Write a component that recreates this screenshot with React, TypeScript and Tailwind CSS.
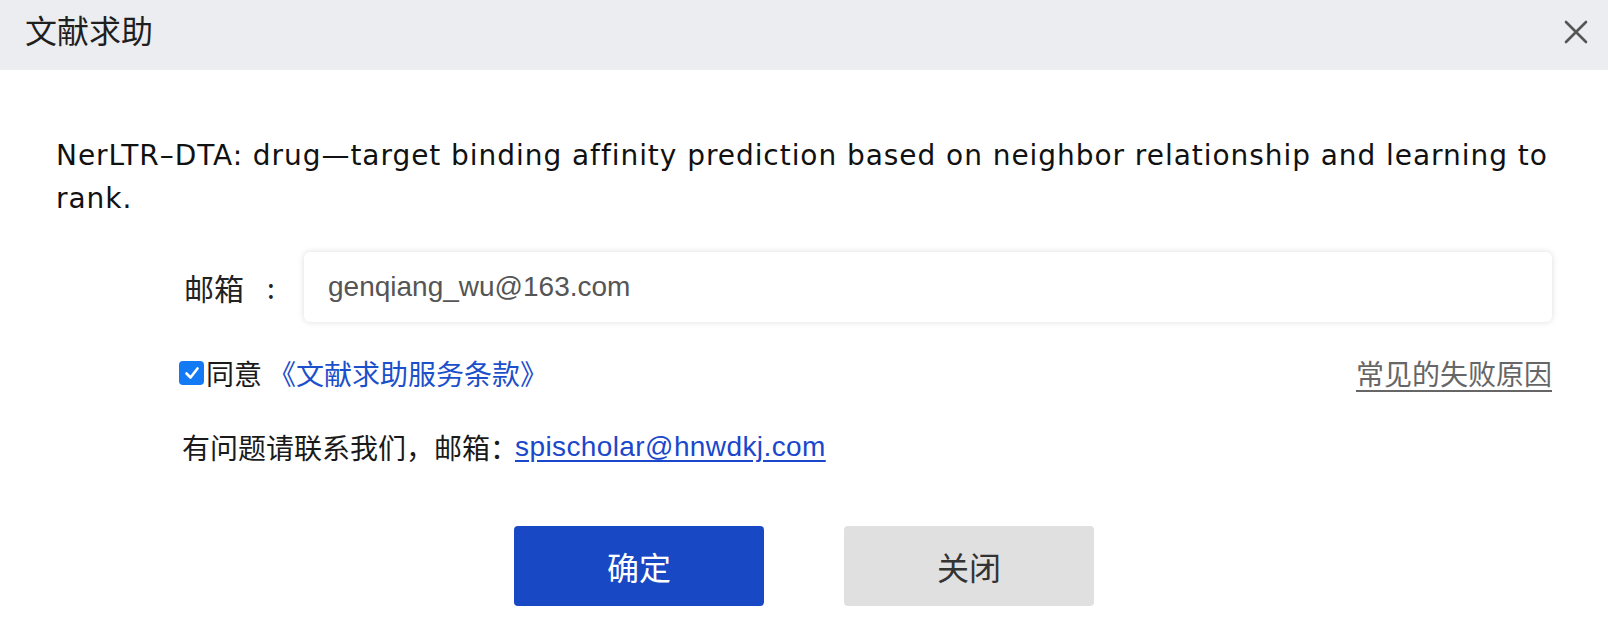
import React from "react";

export default function App() {
  return (
    <div className="w-[1608px] h-[638px] bg-white overflow-hidden font-['Liberation_Sans','Noto_Sans_CJK_SC',sans-serif]">
      <div className="h-[70px] bg-[#ecedf1] flex items-start justify-between pl-[25px] pr-[20px]">
        <div className="pt-[13px] text-[32px] leading-[32px] text-[#1f1f1f] font-['Noto_Sans_CJK_SC',sans-serif]">文献求助</div>
        <div className="pt-[20px]">
          <svg width="24" height="24" viewBox="0 0 24 24">
            <path d="M2 2 L22 22 M22 2 L2 22" stroke="#555" strokeWidth="2.6" strokeLinecap="round" />
          </svg>
        </div>
      </div>
      <div className="px-[56px] pt-[64px]">
        <p className="text-[28px] leading-[43px] text-[#111] tracking-[0.95px] font-['DejaVu_Sans',sans-serif]">
          NerLTR–DTA: drug—target binding affinity prediction based on neighbor relationship and learning to rank.
        </p>
        <div className="mt-[32px] flex items-center">
          <div className="w-[120px] pl-[128px] box-content shrink-0 flex items-center text-[30px] text-[#222] font-['Noto_Sans_CJK_SC',sans-serif]">
            <span>邮箱</span>
            <span className="ml-[23px] text-[28px]">:</span>
          </div>
          <div className="flex-1 h-[70px] rounded-[6px] bg-white shadow-[0_0_6px_rgba(0,0,0,0.14)] flex items-center pl-[24px] text-[28px] text-[#555]">
            genqiang_wu@163.com
          </div>
        </div>
        <div className="mt-[31px] h-[40px] pl-[123px] flex items-center justify-between">
          <div className="flex items-center">
            <span className="w-[25px] h-[24px] rounded-[4px] bg-[#1479f5] flex items-center justify-center">
              <svg width="18" height="18" viewBox="0 0 18 18">
                <path d="M3.5 9.5 L7.5 13.5 L14.5 4.5" stroke="white" strokeWidth="2.6" fill="none" strokeLinecap="round" strokeLinejoin="round" />
              </svg>
            </span>
            <span className="ml-[2px] text-[28px] text-[#1a1a1a] font-['Noto_Sans_CJK_SC',sans-serif]">同意</span>
            <span className="ml-[6px] text-[28px] text-[#1c4fcb] font-['Noto_Sans_CJK_SC',sans-serif]">《文献求助服务条款》</span>
          </div>
          <span className="text-[28px] text-[#666] underline underline-offset-[5px] font-['Noto_Sans_CJK_SC',sans-serif]">常见的失败原因</span>
        </div>
        <div className="mt-[34px] h-[40px] pl-[126px] flex items-center text-[28px] text-[#1a1a1a]">
          <span className="font-['Noto_Sans_CJK_SC',sans-serif]">有问题请联系我们，邮箱：</span>
          <span className="-ml-[3px] text-[28px] tracking-[0.4px] text-[#1a47cc] underline underline-offset-[4px]">spischolar@hnwdkj.com</span>
        </div>
      </div>
      <div className="mt-[59px] flex justify-center gap-[80px]">
        <button className="w-[250px] h-[80px] rounded-[4px] bg-[#1848c4] text-white text-[32px] font-['Noto_Sans_CJK_SC',sans-serif]">确定</button>
        <button className="w-[250px] h-[80px] rounded-[4px] bg-[#e0e0e0] text-[#333] text-[32px] font-['Noto_Sans_CJK_SC',sans-serif]">关闭</button>
      </div>
    </div>
  );
}
